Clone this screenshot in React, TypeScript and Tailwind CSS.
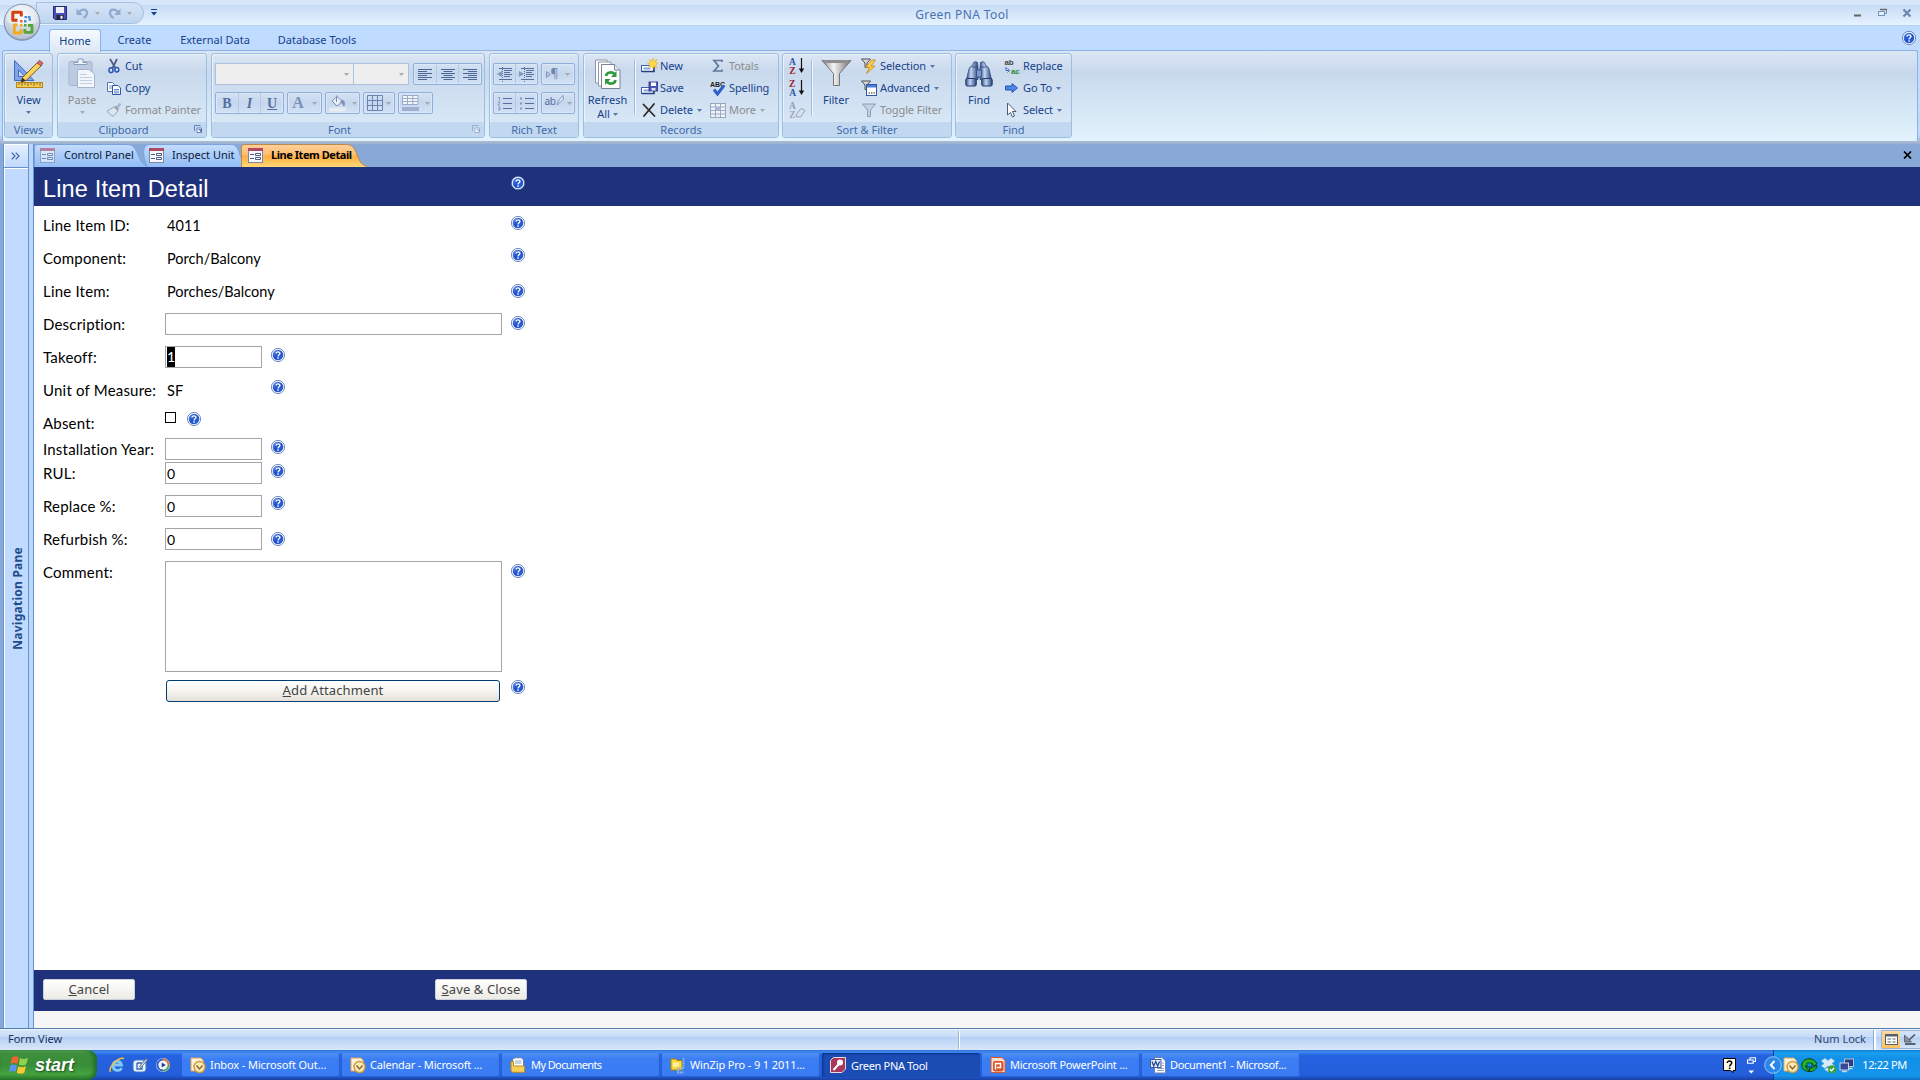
import React from "react";
import clsx from "clsx";

type IconProps = { className?: string };

/* ---------- shared bits ---------- */

const HelpIcon = ({ className }: IconProps) => (
  <svg className={clsx("shrink-0", className)} width="14" height="14" viewBox="0 0 14 14">
    <circle cx="7" cy="7" r="6.6" fill="#fff" stroke="#4a6fa8" strokeWidth="0.8" />
    <circle cx="7" cy="7" r="5.3" fill="url(#helpFill)" />
    <path d="M5.1 5.6C5.1 3.3 9 3.4 8.9 5.5C8.9 6.8 7.1 6.8 7.1 8.4" fill="none" stroke="#fff" strokeWidth="1.4" />
    <rect x="6.3" y="9.3" width="1.5" height="1.4" fill="#fff" />
  </svg>
);

const Caret = ({ dim, className }: { dim?: boolean; className?: string }) => (
  <svg className={clsx("shrink-0", className)} width="5" height="3" viewBox="0 0 5 3">
    <path d="M0 0H5L2.5 3Z" fill={dim ? "#a9a9ac" : "#5578ad"} />
  </svg>
);

const Defs = () => (
  <svg width="0" height="0" className="absolute">
    <defs>
      <linearGradient id="helpFill" x1="0" y1="0" x2="1" y2="1">
        <stop offset="0" stopColor="#5b8ff0" />
        <stop offset="0.5" stopColor="#1f4fcb" />
        <stop offset="1" stopColor="#2a6de6" />
      </linearGradient>
      <radialGradient id="orb" cx="0.5" cy="0.35" r="0.65">
        <stop offset="0" stopColor="#ffffff" />
        <stop offset="0.6" stopColor="#e2e8f0" />
        <stop offset="1" stopColor="#a9b6c8" />
      </radialGradient>
      <linearGradient id="steel" x1="0" y1="0" x2="1" y2="0">
        <stop offset="0" stopColor="#8d8d8d" />
        <stop offset="0.4" stopColor="#f4f4f4" />
        <stop offset="1" stopColor="#6f6f6f" />
      </linearGradient>
      <linearGradient id="lens" x1="0" y1="0" x2="1" y2="0">
        <stop offset="0" stopColor="#2f4f88" />
        <stop offset="0.4" stopColor="#c3d4f0" />
        <stop offset="1" stopColor="#27457c" />
      </linearGradient>
      <linearGradient id="tabBlue" x1="0" y1="0" x2="0" y2="1">
        <stop offset="0" stopColor="#c4dcfd" />
        <stop offset="0.5" stopColor="#a9cbf8" />
        <stop offset="1" stopColor="#8fbcf6" />
      </linearGradient>
      <linearGradient id="tabOrange" x1="0" y1="0" x2="0" y2="1">
        <stop offset="0" stopColor="#ffd09a" />
        <stop offset="0.42" stopColor="#ffbf70" />
        <stop offset="0.5" stopColor="#ffae45" />
        <stop offset="1" stopColor="#ffdd78" />
      </linearGradient>
    </defs>
  </svg>
);

/* ---------- ribbon icons ---------- */

const OfficeOrb = () => (
  <svg width="40" height="40" viewBox="0 0 40 40">
    <circle cx="20" cy="20.5" r="18.3" fill="#7f93b3" />
    <circle cx="20" cy="20" r="17.8" fill="url(#orb)" stroke="#8797ad" />
    <path d="M4 20C10 24 30 24 36 20C36 38 4 38 4 20Z" fill="#b9c4d4" opacity="0.45" />
    <g fill="none" strokeLinejoin="round">
      <path d="M15.5 18.2H10.8V10.3H19.3V14.5" stroke="#d6400f" strokeWidth="3" />
      <path d="M22.5 15.2H27.8V19.5" stroke="#3f8edb" strokeWidth="2.2" strokeDasharray="2.4 0.8" />
      <path d="M15.5 22.8H12.3V31H19V27" stroke="#f4a91c" strokeWidth="2.8" />
      <path d="M22.8 27V30.3H30V23.3H26" stroke="#57a533" strokeWidth="2.8" />
    </g>
    <path d="M18 18h2.5v2.5H18z" fill="#e8662a" />
    <path d="M22 18h2.5v2.5h-2.5z" fill="#3f8edb" />
    <path d="M18 22h2.5v2.5H18z" fill="#f4a91c" />
    <path d="M22 22h2.5v2.5h-2.5z" fill="#57a533" />
  </svg>
);

const FloppyIcon = () => (
  <svg width="14" height="14" viewBox="0 0 14 14">
    <path d="M0.5 0.5H13.5V13.5H2L0.5 12Z" fill="#4a4fb5" stroke="#26286f" />
    <rect x="3" y="1" width="8" height="6" fill="#eef1fb" />
    <rect x="3.5" y="9" width="7" height="4.5" fill="#23253f" />
    <rect x="7.5" y="9.8" width="2" height="3" fill="#fff" />
  </svg>
);

const UndoIcon = ({ flip }: { flip?: boolean }) => (
  <svg width="13" height="12" viewBox="0 0 13 12" className={clsx(flip && "-scale-x-100")}>
    <path d="M3 5.5C5 1.5 11 1.5 11 6C11 8.5 9.5 10 7.5 11" fill="none" stroke="#93a9cf" strokeWidth="2.2" />
    <path d="M0.5 1.5V8H7Z" fill="#93a9cf" />
  </svg>
);

const ViewIcon = () => (
  <svg width="31" height="30" viewBox="0 0 31 30">
    <path d="M1.5 1.5V21.5H21Z" fill="#7fa4ea" stroke="#4069bf" />
    <path d="M5.5 11V17.5H12Z" fill="#cddaf2" stroke="#4069bf" />
    <path d="M9.5 18.5L25 3L29 6L13 21.5L8 23Z" fill="#f8d25c" stroke="#7a5a1d" />
    <path d="M24 4L26.5 1.2L30 4L28 7Z" fill="#d56a6a" stroke="#8b3f3f" strokeWidth="0.7" />
    <path d="M8 23L9.4 18.8L12.7 21.5Z" fill="#3a2f20" />
    <rect x="3.5" y="23.5" width="26" height="5" fill="#f4cf55" stroke="#b5861b" />
    <path d="M6 24v2M9 24v3M12 24v2M15 24v3M18 24v2M21 24v3M24 24v2M27 24v3" stroke="#7a5a1d" strokeWidth="0.9" />
  </svg>
);

const PasteIcon = () => (
  <svg width="28" height="31" viewBox="0 0 28 31">
    <rect x="1" y="3.5" width="23" height="24" rx="1.5" fill="#bccbe2" stroke="#a4b5cf" />
    <path d="M6 6.5V4.5H10V1H15V4.5H19V6.5Z" fill="#eef2f8" stroke="#8d9cb5" />
    <path d="M9.5 11.5H21L26.5 16V29.5H9.5Z" fill="#f2f6fc" stroke="#a4b5cf" />
    <path d="M12 16.5h7M12 19.5h12M12 22.5h12M12 25.5h12" stroke="#c3cfe2" />
  </svg>
);

const CutIcon = () => (
  <svg width="16" height="16" viewBox="0 0 16 16">
    <path d="M4 1L9.5 10M11 1L6.5 10" stroke="#4c5f85" strokeWidth="1.8" />
    <ellipse cx="5" cy="12.2" rx="2" ry="2.4" fill="#cfe0fa" stroke="#2a55b0" strokeWidth="1.5" />
    <ellipse cx="10.8" cy="11.8" rx="2" ry="2.2" fill="#cfe0fa" stroke="#2a55b0" strokeWidth="1.5" />
  </svg>
);

const CopyIcon = () => (
  <svg width="16" height="16" viewBox="0 0 16 16">
    <path d="M1.5 2.5H6.5L8.5 4.5V11.5H1.5Z" fill="#fff" stroke="#5577b8" />
    <path d="M3 6h4M3 8h4" stroke="#7795cf" />
    <path d="M6.5 5.5H12L14.5 8V14.5H6.5Z" fill="#fff" stroke="#2f57a8" />
    <path d="M8 9.5h5M8 11.2h5M8 12.9h5" stroke="#5f86cf" />
  </svg>
);

const PainterIcon = () => (
  <svg width="16" height="16" viewBox="0 0 16 16">
    <path d="M1 9L8 5L12 9L7 14.5L5 13L3.5 12Z" fill="#dfe4ec" stroke="#9aa5b8" />
    <path d="M8 5L10 3.5L13 6.5L12 9Z" fill="#9aa5b8" />
    <path d="M11.5 5L14.5 1.5" stroke="#aab4c4" strokeWidth="2.4" />
  </svg>
);

const AlignIcon = ({ kind }: { kind: "left" | "center" | "right" }) => {
  const d = {
    left: "M0 .5H14M0 2.5H9M0 4.5H14M0 6.5H9M0 8.5H14M0 10.5H9",
    center: "M0 .5H14M2.5 2.5H11.5M0 4.5H14M2.5 6.5H11.5M0 8.5H14M2.5 10.5H11.5",
    right: "M0 .5H14M5 2.5H14M0 4.5H14M5 6.5H14M0 8.5H14M5 10.5H14",
  }[kind];
  return (
    <svg width="14" height="11" viewBox="0 0 14 11">
      <path d={d} stroke="#4d6795" />
    </svg>
  );
};

const BucketIcon = () => (
  <svg width="17" height="17" viewBox="0 0 17 17">
    <path d="M3 6L8 1.5L13.5 6.5L8 11Z" fill="#e9eef6" stroke="#7d90b3" />
    <path d="M7.5 7V0.5M13 5C16 6 15.5 8.5 15 11C13.5 9 13.5 7.5 11.5 7.5Z" fill="#7d90b3" stroke="#7d90b3" />
    <rect x="0.5" y="12.5" width="16" height="4" fill="#e8edf4" />
  </svg>
);

const GridIcon = () => (
  <svg width="16" height="16" viewBox="0 0 16 16">
    <path d="M.5 .5H15.5V15.5H.5ZM5.5 .5V15.5M10.5 .5V15.5M.5 5.5H15.5M.5 10.5H15.5" fill="none" stroke="#6b84b2" />
  </svg>
);

const AltFillIcon = () => (
  <svg width="17" height="16" viewBox="0 0 17 16">
    <path d="M.5 .5H16V9.5H.5ZM5.5 .5V9.5M10.8 .5V9.5M.5 3.5H16M.5 6.5H16" fill="#f3f5f9" stroke="#9aabc9" />
    <rect x="0" y="12" width="17" height="4" fill="#9fb0cf" />
  </svg>
);

const IndentIcon = ({ out }: { out?: boolean }) => (
  <svg width="15" height="15" viewBox="0 0 15 15">
    <path d="M5.5 0V15" stroke="#566f9d" strokeDasharray="1 1" />
    <path d="M2 1.5H15M7 3.5H15M7 5.5H13M7 7.5H15M7 9.5H13M2 12.5H15" stroke="#566f9d" />
    <path d={out ? "M5 4V10L0 7Z" : "M0 4V10L5 7Z"} fill="#8298bf" />
  </svg>
);

const ListIcon = ({ numbered }: { numbered?: boolean }) => (
  <svg width="15" height="15" viewBox="0 0 15 15">
    <path d="M6 2.5H15M6 7.5H15M6 12.5H15" stroke="#566f9d" />
    {numbered ? (
      <path d="M1 1.5H2.5V4.5M1 6H3L1 9H3M1 11H3V14H1M1.5 12.5H3" fill="none" stroke="#8298bf" strokeWidth="0.9" />
    ) : (
      <path d="M1 1.5h2v2H1zM1 6.5h2v2H1zM1 11.5h2v2H1z" fill="#8298bf" />
    )}
  </svg>
);

const RefreshIcon = () => (
  <svg width="26" height="30" viewBox="0 0 26 30">
    <path d="M.5 1H12V24H.5Z" fill="#fff" stroke="#8f97a6" />
    <path d="M3.5 3H16V27H3.5Z" fill="#fff" stroke="#8f97a6" />
    <path d="M6.5 5.5H19.5L25 11V29.5H6.5Z" fill="#fff" stroke="#7a8496" />
    <path d="M19.5 5.5V11H25" fill="#e5e8ee" stroke="#7a8496" />
    <path d="M11 17C11.5 12.5 18 12.5 19.5 15.5" fill="none" stroke="#2f9a3c" strokeWidth="2.6" />
    <path d="M21.5 12V18H16Z" fill="#2f9a3c" />
    <path d="M20.5 21C20 25.5 13.5 25.5 12 22.5" fill="none" stroke="#2f9a3c" strokeWidth="2.6" />
    <path d="M10 26V20H15.5Z" fill="#2f9a3c" />
  </svg>
);

const RecordIcon = ({ kind }: { kind: "new" | "save" }) => (
  <svg width="17" height="16" viewBox="0 0 17 16">
    <rect x="0.5" y="7.5" width="12" height="6" fill="#fff" stroke="#3f62a8" />
    <path d="M1 13.5H13V8" fill="none" stroke="#233e78" strokeWidth="1.5" />
    <rect x="2.5" y="9.5" width="7" height="2" fill="#7ea6e6" />
    {kind === "new" ? (
      <path d="M12 0L13 3L16 1.5L14.5 4.5L17 5.5L14.5 7L16 10L13 8.5L12 11L10.5 8L7.5 9.5L9 6.5L6.5 5.5L9.5 4.5L8 1.5L11 3Z" fill="#ffd94a" stroke="#e0a91c" strokeWidth="0.5" />
    ) : (
      <>
        <rect x="8" y="2" width="9" height="9" fill="#4a57b8" stroke="#2a2f7c" strokeWidth="0.8" />
        <rect x="10" y="2.5" width="5" height="3.5" fill="#fff" />
        <rect x="10.5" y="8" width="4" height="2.6" fill="#dbe1f5" />
      </>
    )}
  </svg>
);

const DeleteIcon = () => (
  <svg width="16" height="16" viewBox="0 0 16 16">
    <path d="M2.5 2.5L13.5 14M13 2L3 14" stroke="#2b2b2b" strokeWidth="1.8" strokeLinecap="round" />
  </svg>
);

const SigmaIcon = () => (
  <svg width="16" height="16" viewBox="0 0 16 16">
    <path d="M12 4V2.5H4L8.5 8L4 13H12V11.5" fill="none" stroke="#61769d" strokeWidth="1.7" />
  </svg>
);

const SpellingIcon = () => (
  <svg width="18" height="17" viewBox="0 0 18 17">
    <text x="0" y="6.5" fontSize="7" fontWeight="bold" fontFamily="Liberation Sans" fill="#222">ABC</text>
    <path d="M4 9.5L7.5 14L14 5.5" fill="none" stroke="#2f5fc9" strokeWidth="3" />
  </svg>
);

const MoreIcon = () => (
  <svg width="16" height="16" viewBox="0 0 16 16">
    <rect x="0.5" y="1.5" width="15" height="14" fill="#f0f3f8" stroke="#98a8c3" />
    <path d="M.5 5H15.5M.5 8.5H15.5M.5 12H15.5M5.5 1.5V15.5M10.5 1.5V15.5" stroke="#98a8c3" />
    <rect x="5.5" y="5" width="5" height="3.5" fill="#a9b9d3" />
  </svg>
);

const SortIcon = ({ top, bottom }: { top: string; bottom: string }) => (
  <svg width="17" height="18" viewBox="0 0 17 18">
    <text x="0" y="8" fontSize="9.5" fontWeight="bold" fontFamily="Liberation Serif" fill={top === "A" ? "#2c55ab" : "#96232e"}>{top}</text>
    <text x="0.3" y="17" fontSize="9.5" fontWeight="bold" fontFamily="Liberation Serif" fill={bottom === "A" ? "#2c55ab" : "#96232e"}>{bottom}</text>
    <path d="M12.5 1V13" stroke="#111" strokeWidth="1.2" />
    <path d="M9.8 11.5H15.2L12.5 16Z" fill="#111" />
  </svg>
);

const ClearSortIcon = () => (
  <svg width="17" height="18" viewBox="0 0 17 18">
    <text x="0" y="8" fontSize="9.5" fontWeight="bold" fontFamily="Liberation Serif" fill="#8a9fc4">A</text>
    <text x="0.3" y="17" fontSize="9.5" fontWeight="bold" fontFamily="Liberation Serif" fill="#a2a9b8">Z</text>
    <path d="M7 14L12 7.5L16 9.5L11.5 16H8Z" fill="#dce2ec" stroke="#95a3bc" />
  </svg>
);

const FunnelIcon = () => (
  <svg width="31" height="28" viewBox="0 0 31 28">
    <path d="M1 1.5H30L18.5 14.5V26.5H12.5V14.5Z" fill="url(#steel)" stroke="#747474" />
    <path d="M2 1H29L27 4H4Z" fill="#8f8f8f" />
  </svg>
);

const SmallFilterIcon = ({ kind }: { kind: "bolt" | "form" | "dim" }) => (
  <svg width="17" height="16" viewBox="0 0 17 16">
    {kind === "dim" ? (
      <path d="M1.5 2H14.5L9.5 8V14.5H6.5V8Z" fill="#c6d1e4" stroke="#8b9cbb" />
    ) : (
      <path d="M.5 1H9.5L6 5V9.5H4V5Z" fill="#d7d7d7" stroke="#4f4f4f" />
    )}
    {kind === "bolt" && <path d="M11 2L4.5 9.5H8.5L5.5 15.5L14 8H10L14.5 2Z" fill="#ffd23e" stroke="#b9780f" strokeWidth="0.7" />}
    {kind === "form" && (
      <>
        <rect x="5.5" y="4.5" width="10" height="11" fill="#fff" stroke="#2f57a8" />
        <rect x="6" y="5" width="9" height="2.5" fill="#4b7bd6" />
        <path d="M7.5 13H9M10 13H11.5M12.5 13H14" stroke="#333" strokeWidth="1.2" />
      </>
    )}
  </svg>
);

const BinocularsIcon = () => (
  <svg width="28" height="28" viewBox="0 0 28 28">
    <path d="M8.5 2.5Q10.5 .8 12.5 2.5L13 8V19.5H1.5L4 9Q5 6 7.5 5.5Z" fill="url(#lens)" stroke="#2b477c" strokeWidth="0.8" />
    <path d="M15.5 2.5Q17.5 .8 19.5 2.5L20.5 5.5Q23 6 24 9L26.5 19.5H15V8Z" fill="url(#lens)" stroke="#2b477c" strokeWidth="0.8" />
    <rect x="11.5" y="10" width="5" height="7" rx="1" fill="#7d98c8" stroke="#2b477c" strokeWidth="0.8" />
    <rect x="0.8" y="18.5" width="10.5" height="7.5" rx="1.5" fill="url(#lens)" stroke="#223a6b" />
    <rect x="16.7" y="18.5" width="10.5" height="7.5" rx="1.5" fill="url(#lens)" stroke="#223a6b" />
    <path d="M6.5 7H12.5M15.5 7H21.5" stroke="#38558c" />
  </svg>
);

const ReplaceIcon = () => (
  <svg width="17" height="19" viewBox="0 0 17 19">
    <text x="0.5" y="8" fontSize="8" fontWeight="bold" fontFamily="Liberation Sans" fill="#444">ab</text>
    <text x="7" y="17.2" fontSize="8" fontWeight="bold" fontFamily="Liberation Sans" fill="#2c8a35">ac</text>
    <path d="M2 10V13.5H4.5M3.5 11.5L5.5 13.5L3.5 15.5" fill="none" stroke="#3767c2" />
  </svg>
);

const GoToIcon = () => (
  <svg width="16" height="16" viewBox="0 0 16 16">
    <path d="M1.5 6H8V3.5L13.5 8L8 12.5V10H1.5Z" fill="#4d86e8" stroke="#2956ad" />
  </svg>
);

const PointerIcon = () => (
  <svg width="16" height="16" viewBox="0 0 16 16">
    <path d="M3.5 1V13L6.5 10.5L8.5 15L10.5 14L8.5 9.5H12Z" fill="#fff" stroke="#4b5b79" />
  </svg>
);

const Launcher = ({ dim }: { dim?: boolean }) => (
  <svg width="8" height="8" viewBox="0 0 8 8" className="absolute right-[4px] top-[3px]">
    <path d="M.5 6V.5H6.5" fill="none" stroke={dim ? "#9cb0cf" : "#5f83ba"} />
    <path d="M3 3H7.5V7.5H3Z" fill="#fff" stroke={dim ? "#9cb0cf" : "#5f83ba"} />
    <path d="M4 4L7.5 7.5V4.5" fill={dim ? "#9cb0cf" : "#3c5f99"} />
  </svg>
);

/* ---------- ribbon ---------- */

type GroupProps = { label: string; className: string; launcher?: "on" | "dim"; children: React.ReactNode };

const Group = ({ label, className, launcher, children }: GroupProps) => (
  <div className={clsx("h-[85px] shrink-0 rounded-[3px] border border-[#9dbfdf] bg-gradient-to-b from-[#dde7f4] via-[#c9d9ed] via-20% to-[#dcebf8] shadow-[inset_1px_1px_0_#eaf2fb]", className)}>
    <div className="flex h-[68px]">{children}</div>
    <div className={clsx("relative h-[15px] rounded-b-[2px] bg-[#c1d8f0] text-center leading-[15px] text-[#3e6aaa]", launcher && "pr-[17px]")}>
      {label}
      {launcher && <Launcher dim={launcher === "dim"} />}
    </div>
  </div>
);

type CmdProps = { icon: React.ReactNode; label: string; dim?: boolean; menu?: boolean };

const Cmd = ({ icon, label, dim, menu }: CmdProps) => (
  <div className={clsx("flex h-[22px] items-center whitespace-nowrap tracking-[-0.1px]", dim ? "text-[#8d8d8d]" : "text-[#15428b]")}>
    <span className="flex w-[19px] shrink-0 items-center">{icon}</span>
    {label}
    {menu && <Caret dim={dim} className="ml-1" />}
  </div>
);

const Box = ({ className, children }: { className?: string; children: React.ReactNode }) => (
  <div className={clsx("flex h-[22px] items-center rounded-[2px] border border-[#8fb0dc] bg-gradient-to-b from-[#d3e1f3] via-[#c5d7ee] to-[#d2e1f5] shadow-[inset_0_0_0_1px_#dbe7f7]", className)}>
    {children}
  </div>
);

const Cell = ({ className, children }: { className?: string; children: React.ReactNode }) => (
  <span className={clsx("flex h-[20px] flex-1 items-center justify-center border-r border-[#b4cbe8] last:border-r-0", className)}>{children}</span>
);

const Separator = ({ className }: IconProps) => (
  <div className={clsx("mt-[6px] h-[55px] w-[2px] shrink-0 border-l border-[#9dbce0] bg-[#eef5fc]", className)} />
);

const Ribbon = () => (
  <div className="mx-[2px] flex h-[91px] gap-[4px] rounded-[3px] border border-[#8db2e3] border-b-[#e3f4fd] bg-gradient-to-b from-[#dbe6f4] via-[#c8d9ed] via-25% to-[#e2f3fd] pl-px pt-[2px] text-[11px]">
    <Group label="Views" className="w-[49px]">
      <div className="flex flex-1 flex-col items-center pt-[5px] text-[#15428b]">
        <ViewIcon />
        <span className="mt-[3px] leading-[16px]">View</span>
        <Caret className="mt-[3px]" />
      </div>
    </Group>

    <Group label="Clipboard" className="w-[150px]" launcher="on">
      <div className="flex w-[48px] flex-col items-center pt-[4px] text-[#8d8d8d]">
        <PasteIcon />
        <span className="mt-[3px] leading-[16px]">Paste</span>
        <Caret dim className="mt-[3px]" />
      </div>
      <div className="pt-px">
        <Cmd icon={<CutIcon />} label="Cut" />
        <Cmd icon={<CopyIcon />} label="Copy" />
        <Cmd icon={<PainterIcon />} label="Format Painter" dim />
      </div>
    </Group>

    <Group label="Font" className="w-[274px]" launcher="dim">
      <div className="pl-[3px] pt-[9px]">
        <div className="flex">
          <div className="flex h-[22px] w-[139px] items-center justify-end border border-[#abc1de] bg-[#eeeeee] pr-[4px]">
            <Caret dim />
          </div>
          <div className="-ml-px flex h-[22px] w-[56px] items-center justify-end border border-[#abc1de] bg-[#eeeeee] pr-[4px]">
            <Caret dim />
          </div>
          <Box className="ml-[4px] w-[69px]">
            <Cell><AlignIcon kind="left" /></Cell>
            <Cell><AlignIcon kind="center" /></Cell>
            <Cell><AlignIcon kind="right" /></Cell>
          </Box>
        </div>
        <div className="mt-[7px] flex gap-[3px] font-['Liberation_Serif',serif] text-[14px] text-[#566f9d]">
          <Box className="w-[69px] font-bold">
            <Cell>B</Cell>
            <Cell className="italic">I</Cell>
            <Cell className="underline">U</Cell>
          </Box>
          <Box className="w-[35px] justify-center gap-[8px]">
            <span className="text-[16px] font-bold text-[#7b90b8]">A</span>
            <Caret dim />
          </Box>
          <Box className="w-[35px] justify-center gap-[6px]">
            <BucketIcon />
            <Caret dim />
          </Box>
          <Box className="w-[32px] justify-center gap-[3px] border-[#6f94cb]">
            <GridIcon />
            <Caret dim />
          </Box>
          <Box className="w-[35px] justify-center gap-[6px]">
            <AltFillIcon />
            <Caret dim />
          </Box>
        </div>
      </div>
    </Group>

    <Group label="Rich Text" className="w-[90px]">
      <div className="pl-[3px] pt-[9px]">
        <div className="flex gap-[3px]">
          <Box className="w-[45px]">
            <Cell><IndentIcon out /></Cell>
            <Cell><IndentIcon /></Cell>
          </Box>
          <Box className="w-[34px] justify-center gap-[7px] text-[#6f86b1]">
            <span className="flex items-center text-[12px]">
              <svg width="5" height="7" viewBox="0 0 5 7"><path d="M.5 .5V6.5L4.5 3.5Z" fill="#b9c9e2" stroke="#8298bf" /></svg>¶
            </span>
            <Caret dim />
          </Box>
        </div>
        <div className="mt-[7px] flex gap-[3px]">
          <Box className="w-[45px]">
            <Cell><ListIcon numbered /></Cell>
            <Cell><ListIcon /></Cell>
          </Box>
          <Box className="w-[34px] justify-center gap-[3px] text-[#566f9d]">
            <span className="-mt-[4px] flex text-[10px] leading-[14px] tracking-[-0.3px]">
              ab
              <svg width="8" height="13" viewBox="0 0 8 13"><path d="M1 11L3 6L7 1.5L7.5 5L3.5 9Z" fill="#e6ebf4" stroke="#8298bf" /></svg>
            </span>
            <Caret dim />
          </Box>
        </div>
      </div>
    </Group>

    <Group label="Records" className="w-[196px]">
      <div className="flex w-[48px] flex-col items-center pr-px pt-[5px] text-[#15428b]">
        <RefreshIcon />
        <span className="mt-[3px] leading-[15px]">Refresh</span>
        <span className="flex items-center leading-[14px]">All<Caret className="ml-[3px]" /></span>
      </div>
      <Separator className="ml-[2px]" />
      <div className="ml-[5px] w-[69px] pt-px">
        <Cmd icon={<RecordIcon kind="new" />} label="New" />
        <Cmd icon={<RecordIcon kind="save" />} label="Save" />
        <Cmd icon={<DeleteIcon />} label="Delete" menu />
      </div>
      <div className="pt-px">
        <Cmd icon={<SigmaIcon />} label="Totals" dim />
        <Cmd icon={<SpellingIcon />} label="Spelling" />
        <Cmd icon={<MoreIcon />} label="More" dim menu />
      </div>
    </Group>

    <Group label="Sort & Filter" className="-ml-px w-[170px]">
      <div className="w-[28px] pl-[6px] pt-px">
        <div className="flex h-[22px] items-center"><SortIcon top="A" bottom="Z" /></div>
        <div className="flex h-[22px] items-center"><SortIcon top="Z" bottom="A" /></div>
        <div className="flex h-[22px] items-center"><ClearSortIcon /></div>
      </div>
      <Separator />
      <div className="flex w-[48px] flex-col items-center pr-[2px] pt-[5px] text-[#15428b]">
        <FunnelIcon />
        <span className="mt-[5px] leading-[16px]">Filter</span>
      </div>
      <div className="pt-px">
        <Cmd icon={<SmallFilterIcon kind="bolt" />} label="Selection" menu />
        <Cmd icon={<SmallFilterIcon kind="form" />} label="Advanced" menu />
        <Cmd icon={<SmallFilterIcon kind="dim" />} label="Toggle Filter" dim />
      </div>
    </Group>

    <Group label="Find" className="-ml-px w-[117px]">
      <div className="flex w-[48px] flex-col items-center pr-[2px] pt-[6px] text-[#15428b]">
        <BinocularsIcon />
        <span className="mt-[4px] leading-[16px]">Find</span>
      </div>
      <div className="pt-px">
        <Cmd icon={<ReplaceIcon />} label="Replace" />
        <Cmd icon={<GoToIcon />} label="Go To" menu />
        <Cmd icon={<PointerIcon />} label="Select" menu />
      </div>
    </Group>
  </div>
);

/* ---------- window chrome ---------- */

const TitleBar = () => (
  <div className="relative flex h-[26px] border-b border-[#b0d8f6] bg-[linear-gradient(#d6e7fc_0,#d6e7fc_5px,#c7dcf5_5px,#e6f2ff_25px)]">
    <div className="ml-[36px] mt-[2px] flex h-[22px] w-[108px] items-center rounded-r-full border border-[#a3bfe2] bg-gradient-to-b from-[#d5e4f7] to-[#bfd5f0] pl-[16px]">
      <FloppyIcon />
      <span className="ml-[9px] flex"><UndoIcon /></span>
      <Caret dim className="ml-[6px]" />
      <span className="ml-[8px] flex"><UndoIcon flip /></span>
      <Caret dim className="ml-[6px]" />
    </div>
    <svg width="6" height="7" viewBox="0 0 6 7" className="ml-[7px] mt-[9px]">
      <path d="M0 .5H6" stroke="#15428b" />
      <path d="M0 3H6L3 6.5Z" fill="#15428b" />
    </svg>
    <span className="absolute left-[962px] top-[6px] -translate-x-1/2 whitespace-nowrap text-[12px] leading-[18px] tracking-[0.4px] text-[#4a72ae]">Green PNA Tool</span>
    <svg width="62" height="12" viewBox="0 0 62 12" className="ml-auto mr-[6px] mt-[8px]">
      <path d="M2 7.5H9" stroke="#646464" strokeWidth="2" />
      <path d="M28.5 1.5H34.5V5.5H33" fill="none" stroke="#7691b8" />
      <path d="M28 1.5H35" stroke="#6a6a6a" strokeWidth="1.5" />
      <rect x="26.5" y="3.5" width="6" height="4" fill="#e4effc" stroke="#7691b8" />
      <path d="M51.5 1.5L58.5 8.5M58.5 1.5L51.5 8.5" stroke="#6e86ab" strokeWidth="2.2" />
    </svg>
    <div className="absolute left-[2px] top-[2px] z-10">
      <OfficeOrb />
    </div>
  </div>
);

const RibbonTabs = () => (
  <div className="flex h-[25px] items-end bg-[#bfdbff] pl-[49px] pr-[4px] text-[11px] text-[#15428b]">
    <div className="relative z-[5] -mb-px flex h-[23px] w-[52px] items-center justify-center rounded-t-[3px] border border-b-0 border-[#8db2e3] bg-gradient-to-b from-[#f5faff] to-[#dde8f5]">Home</div>
    <div className="flex h-[21px] w-[67px] items-center justify-center">Create</div>
    <div className="flex h-[21px] w-[94px] items-center justify-center">External Data</div>
    <div className="flex h-[21px] w-[110px] items-center justify-center">Database Tools</div>
    <HelpIcon className="mb-[6px] ml-auto" />
  </div>
);

const FormGlyph = ({ dim }: { dim?: boolean }) => (
  <svg width="15" height="15" viewBox="0 0 15 15" className={clsx(dim && "opacity-60")}>
    <rect x="0.5" y="0.5" width="14" height="14" fill="#f6f7fb" stroke="#7b87a5" />
    <rect x="0" y="0" width="15" height="3" fill="#b04a62" />
    <path d="M2 6.5H6M2 10.5H6" stroke="#4d5f86" />
    <path d="M7.5 5.5H12.5V7.5H7.5ZM7.5 9.5H12.5V11.5H7.5Z" fill="#fff" stroke="#4d5f86" />
  </svg>
);

const DocTabs = () => (
  <div className="flex h-[23px] text-[11px] text-[#0a1a3a]">
    <div className="relative flex w-[109px] items-center pl-[6px]">
      <svg width="116" height="23" viewBox="0 0 116 23" className="absolute left-0 top-0">
        <path d="M.5 24V3Q.5 .5 3 .5H94C105 .5 103 20 114 22.5V24Z" fill="url(#tabBlue)" stroke="#7ba3de" />
      </svg>
      <span className="relative"><FormGlyph dim /></span>
      <span className="relative ml-[9px] whitespace-nowrap">Control Panel</span>
    </div>
    <div className="relative flex w-[98px] items-center pl-[6px]">
      <svg width="99" height="23" viewBox="0 0 99 23" className="absolute left-0 top-0">
        <path d="M5 24C0 16 -2 .5 6 .5H88C96 .5 95 9 98.5 14V24Z" fill="url(#tabBlue)" stroke="#7ba3de" />
      </svg>
      <span className="relative"><FormGlyph /></span>
      <span className="relative ml-[8px] whitespace-nowrap">Inspect Unit</span>
    </div>
    <div className="relative flex w-[127px] items-center pl-[7px] font-bold text-black">
      <svg width="128" height="23" viewBox="0 0 128 23" className="absolute left-0 top-0">
        <path d="M.5 24V3Q.5 .5 3.5 .5H106C118 .5 114 20 126 22.5V24Z" fill="url(#tabOrange)" stroke="#b98a4a" />
      </svg>
      <span className="relative"><FormGlyph /></span>
      <span className="relative ml-[8px] whitespace-nowrap tracking-[-0.45px]">Line Item Detail</span>
    </div>
    <svg width="9" height="8" viewBox="0 0 9 8" className="ml-auto mr-[8px] mt-[7px]">
      <path d="M1 .5L8 7.5M8 .5L1 7.5" stroke="#000" strokeWidth="1.7" />
    </svg>
  </div>
);

/* ---------- form ---------- */

const TextBox = ({ wide, value, selected }: { wide?: boolean; value?: string; selected?: boolean }) => (
  <div className={clsx("flex h-[22px] items-center border border-[#a5a5a5] bg-white pl-px text-[14px]", wide ? "w-[337px]" : "w-[97px]")}>
    {selected ? <span className="h-[20px] w-[8px] bg-black text-center leading-[20px] text-white">{value}</span> : value}
  </div>
);

type RowProps = { label: string; height: string; help: string; children: React.ReactNode };

const Row = ({ label, height, help, children }: RowProps) => (
  <div className={clsx("flex items-start", height)}>
    <span className="w-[122px] shrink-0 whitespace-nowrap leading-[23px] tracking-[0.2px]">{label}</span>
    {children}
    <HelpIcon className={clsx("ml-[9px]", help)} />
  </div>
);

const Value = ({ wide, children }: { wide?: boolean; children: React.ReactNode }) => (
  <span className={clsx("pl-[2px] text-[14.5px] leading-[23px] tracking-[0.03px]", wide ? "w-[337px]" : "w-[97px]")}>{children}</span>
);

const FormBody = () => (
  <div className="h-[764px] bg-white pl-[9px] pt-[8px] font-[Lato,sans-serif] text-[15px] text-black">
    <Row label="Line Item ID:" height="h-[33px]" help="mt-[2px]"><Value wide>4011</Value></Row>
    <Row label="Component:" height="h-[33px]" help="mt-px"><Value wide>Porch/Balcony</Value></Row>
    <Row label="Line Item:" height="h-[33px]" help="mt-[4px]"><Value wide>Porches/Balcony</Value></Row>
    <Row label="Description:" height="h-[33px]" help="mt-[3px]"><TextBox wide /></Row>
    <Row label="Takeoff:" height="h-[33px]" help="mt-[2px]"><TextBox value="1" selected /></Row>
    <Row label="Unit of Measure:" height="h-[33px]" help="mt-px"><Value>SF</Value></Row>
    <Row label="Absent:" height="h-[26px]" help="mt-0">
      <span className="mr-[2px] h-[11px] w-[11px] border border-black bg-white" />
    </Row>
    <Row label="Installation Year:" height="h-[24px]" help="mt-[2px]"><TextBox /></Row>
    <Row label="RUL:" height="h-[33px]" help="mt-[2px]"><TextBox value="0" /></Row>
    <Row label="Replace %:" height="h-[33px]" help="mt-px"><TextBox value="0" /></Row>
    <Row label="Refurbish %:" height="h-[33px]" help="mt-[4px]"><TextBox value="0" /></Row>
    <Row label="Comment:" height="h-[119px]" help="mt-[3px]">
      <div className="h-[111px] w-[337px] border border-[#a5a5a5] bg-white" />
    </Row>
    <Row label="" height="h-[24px]" help="mt-0">
      <button className="ml-px mr-[2px] h-[22px] w-[334px] rounded-[3px] border border-[#003c74] bg-gradient-to-b from-white via-[#f5f4ef] to-[#e3e1d8] pb-[2px] font-['Noto_Sans',sans-serif] text-[13px] leading-[17px] tracking-[0.12px] text-[#444]">
        <span className="underline">A</span>dd Attachment
      </button>
    </Row>
  </div>
);

const FooterButton = ({ accel, rest, className }: { accel: string; rest: string; className?: string }) => (
  <button className={clsx("h-[21px] w-[92px] whitespace-nowrap rounded-[2px] border border-[#c8d0d8] bg-gradient-to-b from-white to-[#ecebe4] pb-[2px] text-[13px] leading-[16px] tracking-[0.1px] text-[#444]", className)}>
    <span className="underline">{accel}</span>{rest}
  </button>
);

const NavPane = () => (
  <div className="flex h-full w-[34px] shrink-0 border-r border-[#6593cf] bg-[#bcd7fc]">
    <div className="w-[3px] bg-[#88a9d7]" />
    <div className="flex w-[26px] flex-col border-x border-[#6593cf] bg-[#c1daff]">
      <div className="flex h-[24px] items-center justify-center border-b border-[#6593cf] bg-gradient-to-b from-[#e3efff] to-[#c1daff] pr-[2px] shadow-[inset_1px_1px_0_#fff]">
        <svg width="9" height="8" viewBox="0 0 9 8">
          <path d="M.7 .7L4 4L.7 7.3M4.7 .7L8 4L4.7 7.3" fill="none" stroke="#3c66a6" strokeWidth="1.2" />
        </svg>
      </div>
      <div className="flex flex-1 items-center justify-center pl-[3px] shadow-[inset_1px_1px_0_#fff]">
        <span className="rotate-180 whitespace-nowrap text-[12px] font-bold leading-[16px] tracking-[0.25px] text-[#204d89] [writing-mode:vertical-rl]">Navigation Pane</span>
      </div>
    </div>
  </div>
);

const StatusBar = () => (
  <div className="flex h-[22px] items-center border-t border-[#567db1] bg-[linear-gradient(#fff_0,#d7e6f9_1px,#c7dcf8_8px,#b3d0f5_8px,#d7e5f7_20px)] text-[11px] text-[#15428b]">
    <span className="w-[958px] pl-[8px] text-[#1c2f5c]">Form View</span>
    <span className="h-[18px] w-[10px] border-x border-l-[#9ab5d8] border-r-transparent shadow-[inset_1px_0_0_#fff]" />
    <span className="ml-auto text-[#2f4270]">Num Lock</span>
    <span className="ml-[8px] h-[20px] w-[2px] bg-white shadow-[-1px_0_0_#8fabd3]" />
    <div className="ml-[5px] flex h-[19px] w-[39px] items-center rounded-l-[2px] border border-r-0 border-[#9ab5d8]">
      <span className="flex h-[17px] w-[18px] items-center justify-center bg-gradient-to-b from-[#ffd9a0] to-[#ffc25c]">
        <svg width="13" height="11" viewBox="0 0 13 11">
          <rect x="0.5" y="0.5" width="12" height="10" fill="#fff" stroke="#55606f" />
          <path d="M0 1.5H13" stroke="#55606f" strokeWidth="2" />
          <path d="M2.5 5H6M2.5 8H6M7.5 5H10.5M7.5 8H10.5" stroke="#55606f" />
        </svg>
      </span>
      <svg width="12" height="11" viewBox="0 0 12 11" className="ml-[4px]">
        <path d="M.5 1V8H7.5Z" fill="#8a8f99" stroke="#4e5663" strokeWidth="0.8" />
        <path d="M5 6L11 .5" stroke="#4e5663" strokeWidth="1.6" />
        <path d="M1 10H11.5" stroke="#4e5663" strokeWidth="1.8" />
      </svg>
    </div>
  </div>
);

/* ---------- taskbar ---------- */

const OutlookIcon = () => (
  <svg width="16" height="17" viewBox="0 0 16 17">
    <path d="M1 1H11L13.5 4V14H1Z" fill="#fff1d8" stroke="#e0a55a" />
    <circle cx="9.5" cy="10" r="5.5" fill="#fbe8b8" stroke="#cf9a3c" strokeWidth="1.4" />
    <path d="M6.5 8.5L9.5 12L12.5 8.5" fill="none" stroke="#8a6220" strokeWidth="1.3" />
  </svg>
);

const FolderIcon = () => (
  <svg width="16" height="16" viewBox="0 0 16 16">
    <path d="M2.5 2.5L5 .8H11.5L13.5 3V13H2.5Z" fill="#fff" stroke="#6d7fa0" />
    <path d="M5 4h6.5M5 6h6.5" stroke="#8fa5cc" />
    <path d="M1 4.5H3.5V9H14.5V15.3H2.5L1 13.8Z" fill="#f7cf5a" stroke="#b98a1e" />
  </svg>
);

const ZipIcon = () => (
  <svg width="16" height="17" viewBox="0 0 16 17">
    <path d="M1 2H6L7 3.5H12V13H1Z" fill="#ffd93a" stroke="#a8860f" />
    <rect x="3" y="5.5" width="6" height="4" fill="#fff3a8" />
    <path d="M13.5 1V11.5H8V15.5H13.5" fill="none" stroke="#8fb5dd" strokeWidth="2" strokeDasharray="1.5 0.7" />
  </svg>
);

const AccessIcon = () => (
  <svg width="16" height="16" viewBox="0 0 16 16">
    <path d="M3.5 .5H15.5V12L12 15.5H.5V3.5Z" fill="#a8375a" stroke="#f3d5de" />
    <circle cx="10" cy="5.5" r="3" fill="#fff" />
    <path d="M8.5 7.5L3.5 13" stroke="#fff" strokeWidth="2" />
  </svg>
);

const PowerPointIcon = () => (
  <svg width="16" height="16" viewBox="0 0 16 16">
    <path d="M1 .5H12L15 3.5V15.5H1Z" fill="#f7ded3" stroke="#d85b2d" />
    <rect x="3" y="4" width="10.5" height="10.5" rx="2" fill="#dd5427" />
    <path d="M5.5 12.5V6.5H10.5V10.5H7" fill="none" stroke="#fff" strokeWidth="1.5" />
  </svg>
);

const WordIcon = () => (
  <svg width="16" height="17" viewBox="0 0 16 17">
    <path d="M4.5 .5H12L15.5 4V16H4.5Z" fill="#fff" stroke="#6c7fa6" />
    <path d="M7 11.5h7M7 13.5h7M12 6h2M12 8.5h2" stroke="#8fa2c8" />
    <rect x="0.5" y="2.5" width="10.5" height="8" fill="#e4ecfa" stroke="#3a5ba0" />
    <path d="M2 4.5L3.7 9L5.7 4.5L7.7 9L9.5 4.5" fill="none" stroke="#2a4a92" strokeWidth="1.3" />
  </svg>
);

const tasks = [
  { label: "Inbox - Microsoft Out...", icon: <OutlookIcon />, spacing: "tracking-[-0.1px]" },
  { label: "Calendar - Microsoft ...", icon: <OutlookIcon />, spacing: "tracking-[-0.17px]" },
  { label: "My Documents", icon: <FolderIcon />, spacing: "tracking-[-0.6px] pl-px" },
  { label: "WinZip Pro - 9 1 2011...", icon: <ZipIcon />, spacing: "tracking-[-0.12px]" },
  { label: "Green PNA Tool", icon: <AccessIcon />, spacing: "tracking-[-0.3px] pl-px pt-[2px]", active: true },
  { label: "Microsoft PowerPoint ...", icon: <PowerPointIcon />, spacing: "tracking-[-0.22px]" },
  { label: "Document1 - Microsof...", icon: <WordIcon />, spacing: "tracking-[-0.3px]" },
];

const StartButton = () => (
  <div className="flex h-[30px] w-[97px] items-center rounded-r-[9px] bg-[linear-gradient(#5eac5a_0,#3c8f3c_4px,#388e38_15px,#43a33f_24px,#2c7a2c_30px)] pl-[9px] shadow-[inset_-3px_0_4px_#1f6a28]">
    <svg width="21" height="20" viewBox="0 0 21 20">
      <path d="M3 2.5C5.5 .8 7.5 1 9.7 2.3L8.3 9C6.3 7.6 4 7.6 1.6 9Z" fill="#f0642d" />
      <path d="M11 3C13.5 4.3 16 4.3 19 2.7L17.3 9.3C14.6 10.9 12 10.9 9.7 9.6Z" fill="#8fd14a" />
      <path d="M1.2 10.6C3.7 9 6 9.1 8 10.5L6.5 17C4.5 15.6 2 15.7 0 17.2Z" fill="#5b93f0" />
      <path d="M9.3 11.2C11.5 12.5 14 12.6 17 11L15.3 17.7C12.5 19.2 10 19 7.8 17.8Z" fill="#fbc92e" />
    </svg>
    <span className="ml-[5px] font-['Liberation_Sans',sans-serif] text-[18px] font-bold italic leading-[28px] text-white [text-shadow:1px_1px_2px_#1b4a1b]">start</span>
  </div>
);

const QuickLaunch = () => (
  <div className="flex w-[85px] items-center gap-[7px] pl-[12px]">
    <svg width="16" height="18" viewBox="0 0 16 18">
      <path d="M12.5 12C11 15.5 4.5 15.5 4 10C3.5 4.5 11.5 3.5 12.5 9H5" fill="none" stroke="#7cc8f8" strokeWidth="2.8" />
      <path d="M1.5 16C-1 12 9 .5 15 2.5" fill="none" stroke="#f3c13a" strokeWidth="1.5" />
    </svg>
    <svg width="16" height="16" viewBox="0 0 16 16">
      <rect x="1" y="3" width="13" height="12" rx="3" fill="#e9f3fd" stroke="#3f78c8" />
      <path d="M5 6H10M5 6V12H10V9" fill="none" stroke="#2f66b8" strokeWidth="1.3" />
      <path d="M7.5 9.5L14 1.5L15.5 3L9 10.5Z" fill="#cfd9e6" stroke="#4d4d4d" strokeWidth="0.7" />
    </svg>
    <svg width="16" height="16" viewBox="0 0 16 16">
      <circle cx="8" cy="8" r="7" fill="#c3cfe4" />
      <path d="M8 1.5A6.5 6.5 0 0 1 14.5 8H8Z" fill="#e0702e" />
      <path d="M14.5 8A6.5 6.5 0 0 1 8 14.5V8Z" fill="#57a845" />
      <path d="M8 14.5A6.5 6.5 0 0 1 1.5 8 6.5 6.5 0 0 1 8 1.5Z" fill="#2f5fc9" />
      <circle cx="8" cy="8" r="4.6" fill="#f4f7fc" />
      <path d="M6.7 5.5V10.5L10.8 8Z" fill="#1f3f9a" />
    </svg>
  </div>
);

const Tray = () => (
  <>
    <svg width="13" height="15" viewBox="0 0 13 15" className="ml-auto">
      <path d="M.5 .5H12.5V12.5H10V14.5L7.5 12.5H.5Z" fill="#fffde8" stroke="#000" />
      <path d="M4.2 5C4.2 2.3 9 2.5 8.7 5C8.5 6.7 6.6 6.5 6.6 8.5" fill="none" stroke="#000" strokeWidth="1.5" />
      <rect x="5.8" y="9.5" width="1.6" height="1.6" fill="#000" />
    </svg>
    <svg width="9" height="17" viewBox="0 0 9 17" className="ml-[11px]">
      <path d="M3 3V.8H8.5V4.5H6.5M.5 3H6.2V6.2H.5Z" fill="none" stroke="#fff" strokeWidth="1.1" />
      <path d="M1.5 13.5H7L4.2 16.5Z" fill="#fff" />
    </svg>
    <div className="relative ml-[17px] flex h-[30px] w-[147px] items-center border-l border-[#0b3ea0] bg-[linear-gradient(#0f7fd8_0,#1aa0f0_3px,#1290e8_8px,#1494ea_26px,#0d6fc4_30px)] pl-[9px]">
      <svg width="18" height="18" viewBox="0 0 18 18" className="absolute left-[-10px] top-[6px]">
        <circle cx="9" cy="9" r="8.3" fill="#2a86e8" stroke="#9fd0fa" strokeWidth="0.9" />
        <path d="M10.5 5L6.8 9L10.5 13" fill="none" stroke="#fff" strokeWidth="2" />
      </svg>
      <div className="flex items-center gap-[2px]">
        <OutlookIcon />
        <svg width="17" height="15" viewBox="0 0 17 15">
          <path d="M8 .8C12 .8 15 3 15.8 6L13 8L11 5.5H7V8H4L8.5 13.5C3.5 13.5 .8 10.5 .8 7.3C.8 3.5 4 .8 8 .8Z" fill="#22b42a" stroke="#0a3d0a" />
          <path d="M15.8 7.5C15.5 11.5 12.5 13.5 8.5 13.5V10H11.5L13 8.5Z" fill="#22b42a" stroke="#0a3d0a" />
          <rect x="6" y="5" width="5" height="4" fill="#1290e8" stroke="#0a3d0a" strokeWidth="0.8" />
        </svg>
        <svg width="17" height="17" viewBox="0 0 17 17">
          <path d="M1 4L5 1L8 3.5L11 1L15 4L12 6.5L15 9L11 11.5L8 9L5 11.5L1 9L4 6.5ZM4 12L8 10.5L12 12L8 15Z" fill="#d6ecfb" stroke="#5aa7dd" strokeWidth="0.7" />
          <circle cx="12" cy="12.3" r="4" fill="#3ba53b" />
          <path d="M10 12.3L11.5 13.8L14 10.8" fill="none" stroke="#fff" strokeWidth="1.3" />
        </svg>
        <svg width="15" height="15" viewBox="0 0 15 15">
          <rect x="5.5" y="1" width="9" height="7.5" fill="#2b3f86" stroke="#b9bfcc" />
          <rect x="1" y="5" width="8.5" height="7" fill="#34499a" stroke="#cfd4de" />
          <path d="M3 13.5H8M10 10.5H13.5" stroke="#cfd4de" strokeWidth="1.5" />
        </svg>
      </div>
      <span className="absolute right-[13px] whitespace-nowrap text-[11px] tracking-[-0.35px]">12:22 PM</span>
    </div>
  </>
);

const Taskbar = () => (
  <div className="flex h-[30px] items-center bg-[linear-gradient(#2f6fd8_0,#3c8af0_2px,#2663e0_5px,#245edb_25px,#1941a5_30px)] text-[11px] text-white">
    <StartButton />
    <QuickLaunch />
    <div className="flex gap-[2px]">
      {tasks.map((t) => (
        <div
          key={t.label}
          className={clsx(
            "flex h-[24px] w-[158px] items-center gap-[4px] rounded-[2px] pl-[8px]",
            t.active
              ? "bg-[#1b4cb4] shadow-[inset_1px_1px_2px_#0d2f80]"
              : "bg-gradient-to-b from-[#5190f7] via-[#3b7df3] via-25% to-[#3a7cf3] shadow-[inset_-1px_-1px_1px_#2a62d0]"
          )}
        >
          {t.icon}
          <span className={clsx("whitespace-nowrap", t.spacing)}>{t.label}</span>
        </div>
      ))}
    </div>
    <Tray />
  </div>
);

const App = () => (
  <div className="h-[1080px] w-[1920px] overflow-hidden bg-[#bfdbff] font-['Noto_Sans',sans-serif]">
    <Defs />
    <TitleBar />
    <RibbonTabs />
    <div className="-mt-px h-[94px] bg-gradient-to-b from-[#bfdbff] from-90% to-[#9dafc9]">
      <Ribbon />
    </div>
    <div className="flex h-[884px] bg-[#88a9d7]">
      <NavPane />
      <div className="flex flex-1 flex-col bg-[#f6f6f6]">
        <div className="bg-[#88a9d7]">
          <DocTabs />
        </div>
        <div className="flex h-[39px] items-start bg-[#1f317b] pl-[9px]">
          <h1 className="w-[468px] font-['Liberation_Sans',sans-serif] text-[23.5px] leading-[45px] tracking-[0.15px] text-white">Line Item Detail</h1>
          <HelpIcon className="mt-[9px]" />
        </div>
        <FormBody />
        <div className="flex h-[41px] items-start bg-[#1f317b] pl-[9px] pt-[9px]">
          <FooterButton accel="C" rest="ancel" />
          <FooterButton accel="S" rest="ave & Close" className="ml-[300px]" />
        </div>
      </div>
    </div>
    <StatusBar />
    <Taskbar />
  </div>
);

export default App;
